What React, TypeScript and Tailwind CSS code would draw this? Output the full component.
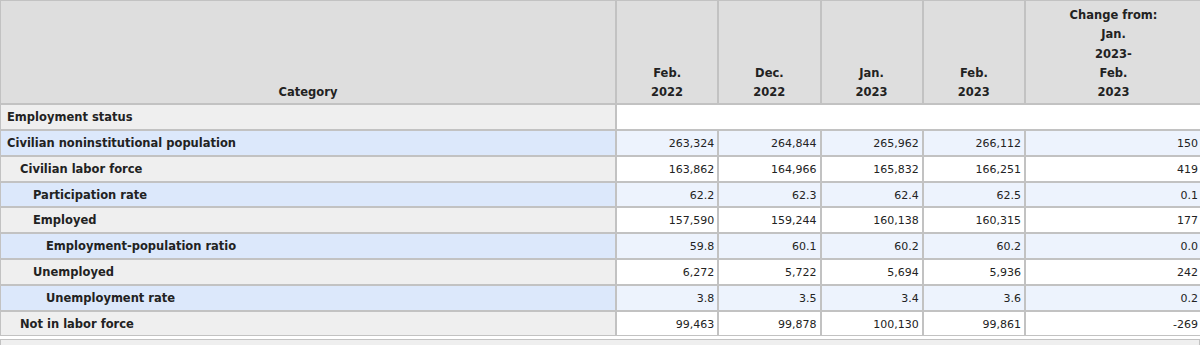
import React from "react";

type Row = {
  label: string;
  level: number;
  blue: boolean;
  values?: string[];
};

const rows: Row[] = [
  { label: "Employment status", level: 0, blue: false },
  { label: "Civilian noninstitutional population", level: 0, blue: true, values: ["263,324", "264,844", "265,962", "266,112", "150"] },
  { label: "Civilian labor force", level: 1, blue: false, values: ["163,862", "164,966", "165,832", "166,251", "419"] },
  { label: "Participation rate", level: 2, blue: true, values: ["62.2", "62.3", "62.4", "62.5", "0.1"] },
  { label: "Employed", level: 2, blue: false, values: ["157,590", "159,244", "160,138", "160,315", "177"] },
  { label: "Employment-population ratio", level: 3, blue: true, values: ["59.8", "60.1", "60.2", "60.2", "0.0"] },
  { label: "Unemployed", level: 2, blue: false, values: ["6,272", "5,722", "5,694", "5,936", "242"] },
  { label: "Unemployment rate", level: 3, blue: true, values: ["3.8", "3.5", "3.4", "3.6", "0.2"] },
  { label: "Not in labor force", level: 1, blue: false, values: ["99,463", "99,878", "100,130", "99,861", "-269"] },
];

const indent = ["pl-[6px]", "pl-[19px]", "pl-[32px]", "pl-[45px]"];

export default function App() {
  return (
    <div
      className="w-[1200px] h-[345px] overflow-hidden bg-white text-[#222]"
      style={{ fontFamily: '"DejaVu Sans", Verdana, sans-serif' }}
    >
      <table className="table-fixed border-separate border-spacing-0 w-[1202px]">
        <colgroup>
          <col className="w-[616px]" />
          <col className="w-[102.25px]" />
          <col className="w-[102.25px]" />
          <col className="w-[102.25px]" />
          <col className="w-[102.25px]" />
          <col className="w-[177px]" />
        </colgroup>
        <thead>
          <tr>
            <th className="border border-[#c2c2c2] bg-[#dedede] align-bottom text-center font-bold text-[11.5px] leading-[19.25px] pt-[5px] pb-[1px]">
              Category
            </th>
            {[
              ["Feb.", "2022"],
              ["Dec.", "2022"],
              ["Jan.", "2023"],
              ["Feb.", "2023"],
              ["Change from:", "Jan.", "2023-", "Feb.", "2023"],
            ].map((lines, i) => (
              <th
                key={i}
                className="border border-[#c2c2c2] bg-[#dedede] align-bottom text-center font-bold text-[11.5px] leading-[19.25px] pt-[5px] pb-[1px]"
              >
                {lines.map((l, j) => (
                  <div key={j}>{l}</div>
                ))}
              </th>
            ))}
          </tr>
        </thead>
        <tbody>
          {rows.map((r, i) => (
            <tr key={i}>
              <th
                className={`border border-[#c2c2c2] text-left font-bold text-[11.5px] leading-[17.8px] pt-[4px] pb-[2px] whitespace-nowrap ${indent[r.level]} ${
                  r.blue ? "bg-[#dce8fb]" : "bg-[#efefef]"
                }`}
              >
                {r.label}
              </th>
              {r.values ? (
                r.values.map((v, j) => (
                  <td
                    key={j}
                    className={`border border-[#c2c2c2] text-right text-[11px] leading-[17.8px] pt-[4px] pb-[2px] pr-[3px] ${
                      r.blue ? "bg-[#edf3fd]" : "bg-white"
                    }`}
                  >
                    {v}
                  </td>
                ))
              ) : (
                <td colSpan={5} className="border border-[#c2c2c2] bg-white text-[11px] leading-[17.8px] pt-[4px] pb-[2px]">
                  &nbsp;
                </td>
              )}
            </tr>
          ))}
        </tbody>
      </table>
      <div className="mt-[3px] h-[12px] w-full border border-[#c2c2c2] bg-[#efefef]" />
    </div>
  );
}
